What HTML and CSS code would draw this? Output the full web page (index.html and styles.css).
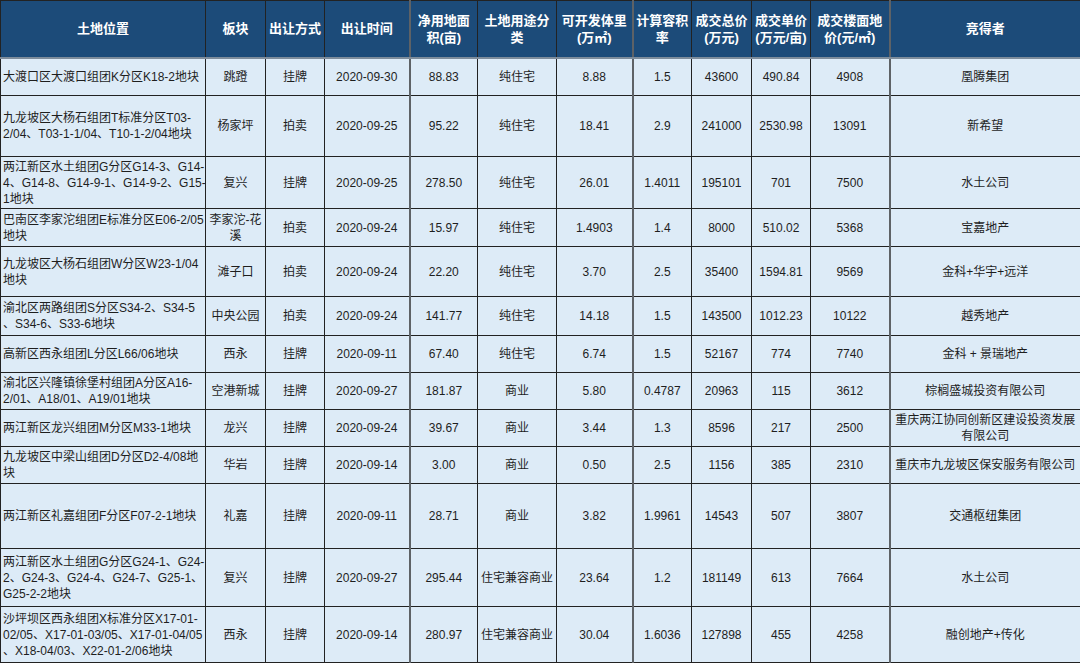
FILE: index.html
```html
<!DOCTYPE html>
<html lang="zh-CN">
<head>
<meta charset="utf-8">
<title>土地成交</title>
<link rel="stylesheet" href="styles.css">
</head>
<body>
<table class="land">
  <colgroup>
    <col class="c1"><col class="c2"><col class="c3"><col class="c4"><col class="c5"><col class="c6">
    <col class="c7"><col class="c8"><col class="c9"><col class="c10"><col class="c11"><col class="c12">
  </colgroup>
  <thead>
    <tr class="h-row">
      <th>土地位置</th>
      <th>板块</th>
      <th>出让方式</th>
      <th>出让时间</th>
      <th class="g-left">净用地面<br>积(亩)</th>
      <th>土地用途分<br>类</th>
      <th>可开发体里<br>(万㎡)</th>
      <th class="g-left">计算容积<br>率</th>
      <th>成交总价<br>(万元)</th>
      <th>成交单价<br>(万元/亩)</th>
      <th>成交楼面地<br>价(元/㎡)</th>
      <th class="g-left">竞得者</th>
    </tr>
  </thead>
  <tbody>
    <tr class="r38">
      <td class="loc">大渡口区大渡口组团K分区K18-2地块</td>
      <td>跳蹬</td><td>挂牌</td><td>2020-09-30</td><td class="g-left">88.83</td><td>纯住宅</td>
      <td>8.88</td><td class="g-left">1.5</td><td>43600</td><td>490.84</td><td>4908</td><td class="g-left">凰腾集团</td>
    </tr>
    <tr class="r61">
      <td class="loc">九龙坡区大杨石组团T标准分区T03-<br>2/04、T03-1-1/04、T10-1-2/04地块</td>
      <td>杨家坪</td><td>拍卖</td><td>2020-09-25</td><td class="g-left">95.22</td><td>纯住宅</td>
      <td>18.41</td><td class="g-left">2.9</td><td>241000</td><td>2530.98</td><td>13091</td><td class="g-left">新希望</td>
    </tr>
    <tr class="r52">
      <td class="loc">两江新区水土组团G分区G14-3、G14-<br>4、G14-8、G14-9-1、G14-9-2、G15-<br>1地块</td>
      <td>复兴</td><td>挂牌</td><td>2020-09-25</td><td class="g-left">278.50</td><td>纯住宅</td>
      <td>26.01</td><td class="g-left">1.4011</td><td>195101</td><td>701</td><td>7500</td><td class="g-left">水土公司</td>
    </tr>
    <tr class="r38">
      <td class="loc">巴南区李家沱组团E标准分区E06-2/05<br>地块</td>
      <td>李家沱-花<br>溪</td><td>拍卖</td><td>2020-09-24</td><td class="g-left">15.97</td><td>纯住宅</td>
      <td>1.4903</td><td class="g-left">1.4</td><td>8000</td><td>510.02</td><td>5368</td><td class="g-left">宝嘉地产</td>
    </tr>
    <tr class="r50">
      <td class="loc">九龙坡区大杨石组团W分区W23-1/04<br>地块</td>
      <td>滩子口</td><td>拍卖</td><td>2020-09-24</td><td class="g-left">22.20</td><td>纯住宅</td>
      <td>3.70</td><td class="g-left">2.5</td><td>35400</td><td>1594.81</td><td>9569</td><td class="g-left">金科+华宇+远洋</td>
    </tr>
    <tr class="r39">
      <td class="loc">渝北区两路组团S分区S34-2、S34-5<br>、S34-6、S33-6地块</td>
      <td>中央公园</td><td>拍卖</td><td>2020-09-24</td><td class="g-left">141.77</td><td>纯住宅</td>
      <td>14.18</td><td class="g-left">1.5</td><td>143500</td><td>1012.23</td><td>10122</td><td class="g-left">越秀地产</td>
    </tr>
    <tr class="r37">
      <td class="loc">高新区西永组团L分区L66/06地块</td>
      <td>西永</td><td>挂牌</td><td>2020-09-11</td><td class="g-left">67.40</td><td>纯住宅</td>
      <td>6.74</td><td class="g-left">1.5</td><td>52167</td><td>774</td><td>7740</td><td class="g-left">金科 + 景瑞地产</td>
    </tr>
    <tr class="r37">
      <td class="loc">渝北区兴隆镇徐堡村组团A分区A16-<br>2/01、A18/01、A19/01地块</td>
      <td>空港新城</td><td>挂牌</td><td>2020-09-27</td><td class="g-left">181.87</td><td>商业</td>
      <td>5.80</td><td class="g-left">0.4787</td><td>20963</td><td>115</td><td>3612</td><td class="g-left">棕榈盛城投资有限公司</td>
    </tr>
    <tr class="r37">
      <td class="loc">两江新区龙兴组团M分区M33-1地块</td>
      <td>龙兴</td><td>挂牌</td><td>2020-09-24</td><td class="g-left">39.67</td><td>商业</td>
      <td>3.44</td><td class="g-left">1.3</td><td>8596</td><td>217</td><td>2500</td><td class="g-left">重庆两江协同创新区建设投资发展<br>有限公司</td>
    </tr>
    <tr class="r37">
      <td class="loc">九龙坡区中梁山组团D分区D2-4/08地<br>块</td>
      <td>华岩</td><td>挂牌</td><td>2020-09-14</td><td class="g-left">3.00</td><td>商业</td>
      <td>0.50</td><td class="g-left">2.5</td><td>1156</td><td>385</td><td>2310</td><td class="g-left">重庆市九龙坡区保安服务有限公司</td>
    </tr>
    <tr class="r65">
      <td class="loc">两江新区礼嘉组团F分区F07-2-1地块</td>
      <td>礼嘉</td><td>挂牌</td><td>2020-09-11</td><td class="g-left">28.71</td><td>商业</td>
      <td>3.82</td><td class="g-left">1.9961</td><td>14543</td><td>507</td><td>3807</td><td class="g-left">交通枢纽集团</td>
    </tr>
    <tr class="r58">
      <td class="loc">两江新区水土组团G分区G24-1、G24-<br>2、G24-3、G24-4、G24-7、G25-1、<br>G25-2-2地块</td>
      <td>复兴</td><td>挂牌</td><td>2020-09-27</td><td class="g-left">295.44</td><td>住宅兼容商业</td>
      <td>23.64</td><td class="g-left">1.2</td><td>181149</td><td>613</td><td>7664</td><td class="g-left">水土公司</td>
    </tr>
    <tr class="r56">
      <td class="loc">沙坪坝区西永组团X标准分区X17-01-<br>02/05、X17-01-03/05、X17-01-04/05<br>、X18-04/03、X22-01-2/06地块</td>
      <td>西永</td><td>挂牌</td><td>2020-09-14</td><td class="g-left">280.97</td><td>住宅兼容商业</td>
      <td>30.04</td><td class="g-left">1.6036</td><td>127898</td><td>455</td><td>4258</td><td class="g-left">融创地产+传化</td>
    </tr>
  </tbody>
</table>
</body>
</html>
```
FILE: styles.css
```css
html, body {
  margin: 0;
  padding: 0;
  background: #ffffff;
}

.land {
  width: 1080px;
  border-collapse: collapse;
  table-layout: fixed;
  font-family: "Liberation Sans", "Noto Sans CJK SC", sans-serif;
  font-size: 12px;
  color: #1e1e1e;
}

.c1 { width: 205px; }
.c2 { width: 60px; }
.c3 { width: 59px; }
.c4 { width: 85px; }
.c5 { width: 68px; }
.c6 { width: 79px; }
.c7 { width: 76px; }
.c8 { width: 59px; }
.c9 { width: 60px; }
.c10 { width: 59px; }
.c11 { width: 79px; }
.c12 { width: 191px; }

.land th,
.land td {
  border: 1px solid #222222;
  padding: 0 1px;
  text-align: center;
  vertical-align: middle;
  white-space: nowrap;
  overflow: hidden;
}

.land th {
  background: #1c4b79;
  color: #ffffff;
  font-weight: bold;
  font-size: 13px;
  line-height: 17px;
  border-bottom: 2px solid #7d8c9b;
}

.h-row { height: 57px; }

.land td {
  background: #ddebf7;
  line-height: 16px;
}

.land td.loc {
  text-align: left;
  padding: 0 0 0 2px;
}

.land .g-left {
  border-left: 2px solid #5e6266;
}

.r37 { height: 37px; }
.r38 { height: 38px; }
.r39 { height: 39px; }
.r50 { height: 50px; }
.r52 { height: 52px; }
.r56 { height: 56px; }
.r58 { height: 58px; }
.r61 { height: 61px; }
.r65 { height: 65px; }
```
